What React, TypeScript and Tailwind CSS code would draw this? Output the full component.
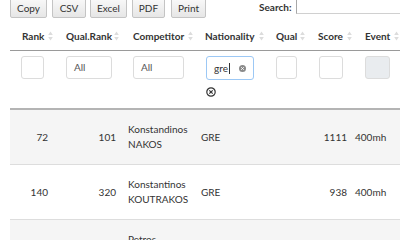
import React from "react";

const Sort = () => (
  <svg width="5" height="10" viewBox="0 0 5 10" className="shrink-0">
    <path d="M2.5 0.5 L4.8 4 L0.2 4 Z" fill="#dcdcdc" />
    <path d="M2.5 9.5 L4.8 6 L0.2 6 Z" fill="#dcdcdc" />
  </svg>
);

const Box = ({ w, gray, children }: { w: string; gray?: boolean; children?: React.ReactNode }) => (
  <div
    className={`${w} h-[23px] rounded-[3px] border border-[#dcdcdc] ${gray ? "bg-[#e9ecef]" : "bg-white"} flex items-center text-[10px] text-[#555]`}
  >
    {children}
  </div>
);

const Btn = ({ label, cls }: { label: string; cls: string }) => (
  <div
    className={`${cls} h-[26px] pt-[6px] flex items-center justify-center border border-[#c4c4c4] rounded-[2px] bg-gradient-to-b from-[#ffffff] to-[#e6e6e6] text-[10px] text-[#333]`}
  >
    {label}
  </div>
);

export default function App() {
  const rows = [
    { rank: "72", q: "101", c1: "Konstandinos", c2: "NAKOS", nat: "GRE", score: "1111", ev: "400mh", bg: "bg-[#f5f5f5]" },
    { rank: "140", q: "320", c1: "Konstantinos", c2: "KOUTRAKOS", nat: "GRE", score: "938", ev: "400mh", bg: "bg-white" },
  ];
  return (
    <div
      className="w-[400px] h-[240px] overflow-hidden bg-white text-[#333]"
      style={{ fontFamily: "Lato, 'Noto Sans', sans-serif" }}
    >
      {/* top bar */}
      <div className="-mt-[8px] h-[26px] flex items-start">
        <div className="flex pl-[10px]">
          <Btn label="Copy" cls="w-[37px]" />
          <Btn label="CSV" cls="ml-[5px] w-[34px]" />
          <Btn label="Excel" cls="ml-[4px] w-[37px]" />
          <Btn label="PDF" cls="ml-[5px] w-[33px]" />
          <Btn label="Print" cls="ml-[6px] w-[35px]" />
        </div>
        <div className="ml-[53px] flex items-start">
          <div className="mt-[8px] leading-[14px] text-[10px] font-bold">Search:</div>
          <div className="ml-[4px] w-[120px] h-[22px] border border-[#d0d0d0] border-l-[#a8a8a8] bg-white" />
        </div>
      </div>

      {/* table */}
      <div className="ml-[10px] mt-[4px] w-[420px]">
        {/* header */}
        <div className="flex h-[29px] items-center border-b border-[#9a9a9a] text-[10px] font-bold">
          <div className="w-[46px] pl-[12px] flex items-center gap-[4px]">Rank<Sort /></div>
          <div className="w-[68px] pl-[10px] flex items-center gap-[2px]">Qual.Rank<Sort /></div>
          <div className="w-[72px] pl-[9px] flex items-center gap-[4px]">Competitor<Sort /></div>
          <div className="w-[72px] pl-[9px] flex items-center gap-[4px]">Nationality<Sort /></div>
          <div className="w-[42px] pl-[8px] flex items-center gap-[3px]">Qual<Sort /></div>
          <div className="w-[42px] pl-[8px] flex items-center gap-[4px]">Score<Sort /></div>
          <div className="w-[60px] pl-[13px] flex items-center gap-[4px]">Event<Sort /></div>
        </div>
        {/* filter row */}
        <div className="flex h-[59px] items-start pt-[5px] border-b-2 border-[#b4b4b4]">
          <div className="w-[46px] pl-[11px]"><Box w="w-[23px]" /></div>
          <div className="w-[68px] pl-[10px]"><Box w="w-[46px]"><span className="pl-[7px]">All</span></Box></div>
          <div className="w-[72px] pl-[9px]"><Box w="w-[51px]"><span className="pl-[7px]">All</span></Box></div>
          <div className="w-[72px] pl-[10px] flex flex-col">
            <div className="w-[48px] h-[24px] rounded-[3px] border border-[#9cc8f5] bg-white flex items-center text-[10px] text-[#333] pl-[7px]">
              <span>gre</span>
              <span className="w-px h-[11px] bg-[#333] ml-[1px]" />
              <svg width="7" height="7" viewBox="0 0 10 10" className="ml-[9px]">
                <circle cx="5" cy="5" r="5" fill="#8a8a8a" />
                <path d="M3.2 3.2 L6.8 6.8 M6.8 3.2 L3.2 6.8" stroke="#fff" strokeWidth="1.4" />
              </svg>
            </div>
            <svg width="10" height="10" viewBox="0 0 10 10" className="mt-[7px]">
              <circle cx="5" cy="5" r="4.2" fill="none" stroke="#333" strokeWidth="1.2" />
              <path d="M3.3 3.3 L6.7 6.7 M6.7 3.3 L3.3 6.7" stroke="#333" strokeWidth="1.2" />
            </svg>
          </div>
          <div className="w-[42px] pl-[8px]"><Box w="w-[21px]" /></div>
          <div className="w-[42px] pl-[9px]"><Box w="w-[24px]" /></div>
          <div className="w-[60px] pl-[13px]"><Box w="w-[25px]" gray /></div>
        </div>
        {/* body */}
        {rows.map((r, i) => (
          <div key={i} className={`flex h-[55px] items-center border-b border-[#dddddd] text-[10px] ${r.bg}`}>
            <div className="w-[46px] pr-[8px] text-right">{r.rank}</div>
            <div className="w-[68px] pr-[8px] text-right">{r.q}</div>
            <div className="w-[72px] pl-[4px] leading-[15px]">
              <div>{r.c1}</div>
              <div>{r.c2}</div>
            </div>
            <div className="w-[72px] pl-[5px]">{r.nat}</div>
            <div className="w-[42px]" />
            <div className="w-[42px] pr-[5px] text-right">{r.score}</div>
            <div className="w-[60px] pl-[3px]">{r.ev}</div>
          </div>
        ))}
        <div className="flex h-[55px] items-start text-[10px] bg-[#f5f5f5]">
          <div className="w-[46px]" />
          <div className="w-[68px]" />
          <div className="w-[72px] pl-[4px] leading-[15px] pt-[12px]">
            <div>Petros</div>
          </div>
        </div>
      </div>
    </div>
  );
}
